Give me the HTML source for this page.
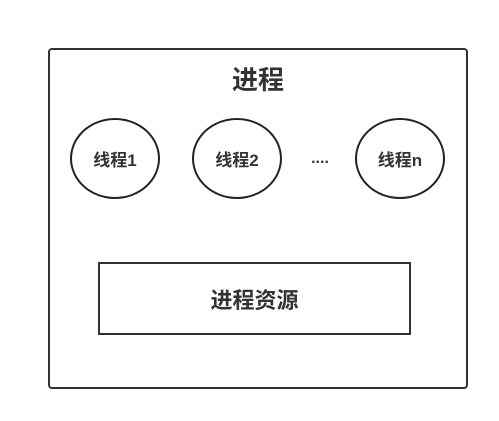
<html><body style="margin:0;background:#fff;width:499px;height:421px;position:relative;font-family:'Liberation Sans','Noto Sans CJK SC',sans-serif;color:#333;font-weight:bold">
<div style="position:absolute;left:48px;top:48px;width:416px;height:337px;border:2px solid #333;border-radius:4px"></div>
<div style="position:absolute;left:208px;top:63px;width:100px;text-align:center;font-size:26px;line-height:34px">进程</div>
<div style="position:absolute;left:70px;top:118px;width:86px;height:77px;border:2px solid #222;border-radius:50%;display:flex;align-items:center;justify-content:center;font-size:17px">线程1</div>
<div style="position:absolute;left:192px;top:118px;width:86px;height:77px;border:2px solid #222;border-radius:50%;display:flex;align-items:center;justify-content:center;font-size:17px">线程2</div>
<div style="position:absolute;left:355px;top:118px;width:86px;height:77px;border:2px solid #222;border-radius:50%;display:flex;align-items:center;justify-content:center;font-size:17px">线程n</div>
<div style="position:absolute;left:300px;top:150px;width:40px;text-align:center;font-size:16px">....</div>
<div style="position:absolute;left:98px;top:262px;width:309px;height:69px;border:2px solid #333;display:flex;align-items:center;justify-content:center;font-size:22px">进程资源</div>
</body></html>
